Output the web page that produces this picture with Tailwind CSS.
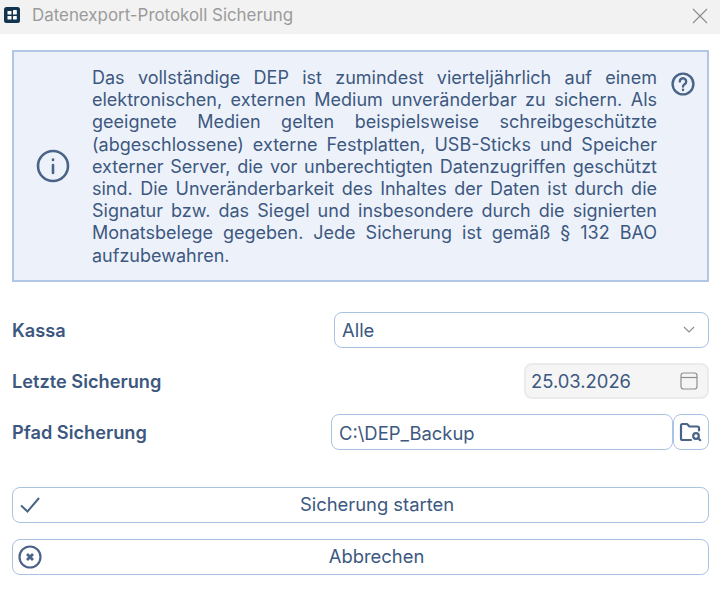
<!DOCTYPE html>
<html lang="de">
<head>
    <meta charset="UTF-8">
    <title>Datenexport-Protokoll Sicherung</title>
    <script src="https://cdn.jsdelivr.net/npm/@tailwindcss/browser@4"></script>
</head>
<body class="bg-white w-[720px] h-[591px] overflow-hidden font-['Inter',sans-serif] text-[#3d5880]">

    <!-- Title bar -->
    <div class="h-[34px] bg-[#f2f2f2] flex items-center pl-1 pb-[2px]">
        <svg class="w-4 h-4 mb-[2px]" viewBox="0 0 16 16">
            <rect width="16" height="16" rx="2.500" fill="#12344f"/>
            <rect x="3.500" y="4" width="4" height="3.500" rx=".6" fill="#fff"/>
            <rect x="9" y="3" width="3.800" height="4.500" rx=".6" fill="#fff"/>
            <rect x="3.500" y="9" width="4" height="3.500" rx=".6" fill="#fff"/>
            <rect x="9" y="9" width="3.800" height="3.500" rx=".6" fill="#fff"/>
        </svg>
        <span class="ml-3 text-[16.9px] text-[#9b9b9b]">Datenexport-Protokoll Sicherung</span>
        <svg class="w-4 h-4 ml-auto mr-[12px]" viewBox="0 0 16 16" fill="none" stroke="#8a8a8a" stroke-width="1.100">
            <path d="M1 1l14 14M15 1L1 15"/>
        </svg>
    </div>

    <div class="pl-3 pr-[11px]">
        <!-- Info box -->
        <div class="mt-4 h-[232px] border-2 border-[#b0c8e6] bg-[#edf2fa] flex">
            <div class="w-[78px] shrink-0 flex items-center justify-center">
                <svg class="w-[34px] h-[34px]" viewBox="0 0 34 34" fill="none" stroke="#4a6487" stroke-width="2.600" stroke-linecap="round">
                    <circle cx="17" cy="17" r="15"/>
                    <path d="M17 16v8"/>
                    <path d="M17 10.500v.4"/>
                </svg>
            </div>
            <p class="w-[565px] mt-[15px] text-[18px] leading-[22.2px] text-justify">Das vollständige DEP ist zumindest vierteljährlich auf einem elektronischen, externen Medium unveränderbar zu sichern. Als geeignete Medien gelten beispielsweise schreibgeschützte (abgeschlossene) externe Festplatten, USB-Sticks und Speicher externer Server, die vor unberechtigten Datenzugriffen geschützt sind. Die Unveränderbarkeit des Inhaltes der Daten ist durch die Signatur bzw. das Siegel und insbesondere durch die signierten Monatsbelege gegeben. Jede Sicherung ist gemäß § 132 BAO aufzubewahren.</p>
            <svg class="w-6 h-6 ml-[14px] mt-[20px]" viewBox="0 0 24 24" fill="none" stroke="#4a6487" stroke-width="2.400" stroke-linecap="round">
                <circle cx="12" cy="12" r="10.400"/>
                <path d="M8.800 9.400a3.200 3.200 0 1 1 4.800 2.800c-1 .6-1.600 1.200-1.600 2.300"/>
                <path d="M12 17.800v.2"/>
            </svg>
        </div>

        <!-- Form rows -->
        <div class="mt-[30px] flex items-center justify-between h-9">
            <label class="pt-[2px] text-[18.2px] font-semibold">Kassa</label>
            <div class="w-[375px] h-9 border border-[#a9c3e3] rounded-lg flex items-center pl-[7px] pr-[13px]">
                <span class="pt-[2px] text-[18.4px]">Alle</span>
                <svg class="w-3 h-2 ml-auto" viewBox="0 0 12 8" fill="none" stroke="#8a8a8a" stroke-width="1.100">
                    <path d="M1 1l5 5 5-5"/>
                </svg>
            </div>
        </div>
        <div class="mt-[15px] flex items-center justify-between h-9">
            <label class="pt-[2px] text-[18.2px] font-semibold">Letzte Sicherung</label>
            <div class="w-[185px] h-9 border-2 border-[#ebebeb] bg-[#f5f5f5] rounded-lg flex items-center pl-[5px] pr-[9px]">
                <span class="pt-[2px] text-[18.4px]">25.03.2026</span>
                <svg class="w-[18px] h-[18px] ml-auto" viewBox="0 0 18 18" fill="none" stroke="#8f8f8f" stroke-width="1.200">
                    <rect x="1" y="1" width="16" height="16" rx="2.500"/>
                    <path d="M1 5.500h16"/>
                </svg>
            </div>
        </div>
        <div class="mt-[15px] flex items-center h-9">
            <label class="pt-[2px] text-[18.2px] font-semibold">Pfad Sicherung</label>
            <div class="ml-auto w-[342px] h-9 border border-[#a9c3e3] rounded-lg flex items-center pl-[7px]">
                <span class="pt-1 text-[18.4px]">C:\DEP_Backup</span>
            </div>
            <button class="w-9 h-9 border border-[#a9c3e3] rounded-lg flex items-center justify-center">
                <svg class="w-[24px] h-[24px]" viewBox="0 0 24 24" fill="none" stroke="#4a6487" stroke-width="2.200" stroke-linejoin="round" stroke-linecap="round">
                    <path d="M12 20H3.500A1.500 1.500 0 0 1 2 18.500V5.500A1.500 1.500 0 0 1 3.500 4H8l2.500 2.500h8A1.500 1.500 0 0 1 20 8v2.500"/>
                    <circle cx="17" cy="16" r="2.800"/>
                    <path d="M19.200 18.200l2 2"/>
                </svg>
            </button>
        </div>

        <!-- Buttons -->
        <button class="relative mt-[37px] w-full h-9 border border-[#a9c3e3] rounded-lg flex items-center justify-center pl-[33px] text-[18.4px]">
            <svg class="absolute left-[7px] top-[8px] w-5 h-5" viewBox="0 0 20 20" fill="none" stroke="#4a6487" stroke-width="2">
                <path d="M1 9.500l6.500 6L19 2"/>
            </svg>
            Sicherung starten
        </button>
        <button class="relative mt-4 w-full h-9 border border-[#a9c3e3] rounded-lg flex items-center justify-center pl-[32px] text-[18.4px]">
            <svg class="absolute left-[5px] top-[5px] w-6 h-6" viewBox="0 0 24 24" fill="none" stroke="#4a6487" stroke-width="2.200">
                <circle cx="12" cy="12" r="10.500"/>
                <path d="M9 9l6 6M15 9l-6 6" stroke-width="2.800"/>
            </svg>
            Abbrechen
        </button>
    </div>
</body>
</html>
